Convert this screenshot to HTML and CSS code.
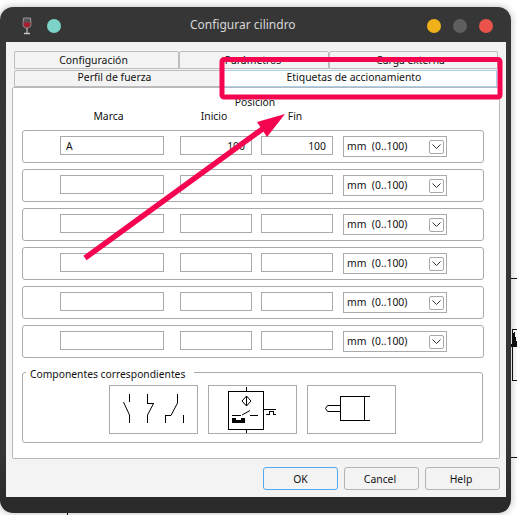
FILE: index.html
```html
<!DOCTYPE html>
<html lang="es">
<head>
<meta charset="utf-8">
<title>Configurar cilindro</title>
<link rel="stylesheet" href="styles.css">
</head>
<body>
<svg class="backdrop" width="517" height="515" viewBox="0 0 517 515" shape-rendering="crispEdges">
  <path d="M511 278.500H517M512.500 329.500H517M512.500 380.500H517M512.500 329V381M511 457.500H517M67.500 513V515" stroke="#111" fill="none"/>
  <path d="M511 347L514 330L517 343V347Z" fill="#111"/>
</svg>
<div class="window">
  <header class="titlebar">
    <div class="title-left">
      <svg class="wine" width="10" height="18" viewBox="0 0 10 18">
        <path d="M1.500 1H8.500L9 7C9 10 7 11 5 11C3 11 1 10 1 7Z" fill="#555" stroke="#aaa" stroke-width=".8"/>
        <path d="M1.500 5.500H8.500C9 9 7 10.500 5 10.500C3 10.500 1 9 1.500 5.500Z" fill="#a81c30"/>
        <path d="M5 11V16" stroke="#bbb" stroke-width="1.200"/>
        <path d="M2 16.500H8" stroke="#ccc" stroke-width="1.400"/>
      </svg>
      <span class="dot dot-teal"></span>
    </div>
    <h1 class="title">Configurar cilindro</h1>
    <div class="title-right">
      <span class="dot dot-amber"></span>
      <span class="dot dot-grey"></span>
      <span class="dot dot-red"></span>
    </div>
  </header>
  <div class="dialog">
    <div class="tabs tabs-back">
      <div class="tab tab-a">Configuración</div>
      <div class="tab tab-b">Parámetros</div>
      <div class="tab tab-c">Carga externa</div>
    </div>
    <div class="tabs tabs-front">
      <div class="tab tab-d">Perfil de fuerza</div>
      <div class="tab tab-e">Etiquetas de accionamiento</div>
    </div>
    <main class="pane">
      <div class="head">
        <span class="h-pos">Posición</span>
        <span class="h-marca">Marca</span>
        <span class="h-inicio">Inicio</span>
        <span class="h-fin">Fin</span>
      </div>
      <div class="rows">
        <div class="row">
          <input class="field wide" value="A">
          <input class="field num gap-a" value="100">
          <input class="field num gap-b" value="100">
          <div class="combo"><span>mm  (0..100)</span><span class="drop"><svg width="9" height="5" viewBox="0 0 9 5"><path d="M.5.500L4.500 4.500L8.500.500" fill="none" stroke="#333"/></svg></span></div>
        </div>
        <div class="row">
          <input class="field wide">
          <input class="field num gap-a">
          <input class="field num gap-b">
          <div class="combo"><span>mm  (0..100)</span><span class="drop"><svg width="9" height="5" viewBox="0 0 9 5"><path d="M.5.500L4.500 4.500L8.500.500" fill="none" stroke="#333"/></svg></span></div>
        </div>
        <div class="row">
          <input class="field wide">
          <input class="field num gap-a">
          <input class="field num gap-b">
          <div class="combo"><span>mm  (0..100)</span><span class="drop"><svg width="9" height="5" viewBox="0 0 9 5"><path d="M.5.500L4.500 4.500L8.500.500" fill="none" stroke="#333"/></svg></span></div>
        </div>
        <div class="row">
          <input class="field wide">
          <input class="field num gap-a">
          <input class="field num gap-b">
          <div class="combo"><span>mm  (0..100)</span><span class="drop"><svg width="9" height="5" viewBox="0 0 9 5"><path d="M.5.500L4.500 4.500L8.500.500" fill="none" stroke="#333"/></svg></span></div>
        </div>
        <div class="row">
          <input class="field wide">
          <input class="field num gap-a">
          <input class="field num gap-b">
          <div class="combo"><span>mm  (0..100)</span><span class="drop"><svg width="9" height="5" viewBox="0 0 9 5"><path d="M.5.500L4.500 4.500L8.500.500" fill="none" stroke="#333"/></svg></span></div>
        </div>
        <div class="row">
          <input class="field wide">
          <input class="field num gap-a">
          <input class="field num gap-b">
          <div class="combo"><span>mm  (0..100)</span><span class="drop"><svg width="9" height="5" viewBox="0 0 9 5"><path d="M.5.500L4.500 4.500L8.500.500" fill="none" stroke="#333"/></svg></span></div>
        </div>
      </div>
      <section class="group">
        <span class="legend">Componentes correspondientes</span>
        <div class="symbols">
          <div class="symbol">
            <svg width="87" height="47" viewBox="110 386 87 47" fill="none" stroke="#000" shape-rendering="crispEdges">
              <path d="M129.500 394V402M129.500 415V423" />
              <path d="M123.500 402L129.500 415" shape-rendering="auto"/>
              <path d="M147.500 394V403.500H154M147.500 415V423" />
              <path d="M153.500 403.500L147.500 415" shape-rendering="auto"/>
              <path d="M177.500 394V403M165.500 423V415.500H171M183.500 415V423" />
              <path d="M177.500 403L171 415.500" shape-rendering="auto"/>
            </svg>
          </div>
          <div class="symbol">
            <svg width="87" height="47" viewBox="209 386 87 47" fill="none" stroke="#000" shape-rendering="crispEdges">
              <path d="M228.500 391.500H263.500V429.500H228.500ZM246.500 387V391M246.500 430V433"/>
              <path d="M246.500 396L251 401L246.500 406L242 401Z" shape-rendering="auto"/>
              <path d="M246.500 396V406"/>
              <path d="M232 415.500H241M250 415.500H258"/>
              <path d="M242 415L250 410.500" shape-rendering="auto"/>
              <path d="M232 418H236V420H241V418H245V423H232Z" fill="#000" stroke="none"/>
              <path d="M264 409.500H276M266 414.500H269.500V411.500H273.500V414.500H276"/>
            </svg>
          </div>
          <div class="symbol">
            <svg width="87" height="47" viewBox="308 386 87 47" fill="none" stroke="#000" shape-rendering="crispEdges">
              <path d="M340.500 396.500H370M340.500 420.500H370M340.500 396V421M364.500 396V421"/>
              <path d="M340 405.500H327.500L325.500 408.500L327.500 411.500H340" shape-rendering="auto"/>
            </svg>
          </div>
        </div>
      </section>
    </main>
    <footer class="actions">
      <button class="btn btn-default">OK</button>
      <button class="btn btn-shift">Cancel</button>
      <button class="btn btn-shift">Help</button>
    </footer>
  </div>
</div>
<svg class="annotation" width="517" height="515" viewBox="0 0 517 515">
  <rect x="222" y="59.500" width="278" height="37.500" rx="2" fill="none" stroke="#f5054f" stroke-width="5"/>
  <path d="M85 258L268 125" fill="none" stroke="#f5054f" stroke-width="5.500"/>
  <path d="M285 114L257 122L267 137Z" fill="#f5054f"/>
</svg>
</body>
</html>
```
FILE: styles.css
```css
* { box-sizing: border-box; }

html, body {
  margin: 0;
  padding: 0;
}

body {
  position: relative;
  width: 517px;
  height: 515px;
  overflow: hidden;
  background: #fff;
  font-family: "Noto Sans", "Open Sans", sans-serif;
  font-size: 10.400px;
  color: #111;
}

.backdrop, .annotation {
  position: absolute;
  left: 0;
  top: 0;
}

.annotation { pointer-events: none; }

.window {
  position: absolute;
  left: 0;
  top: 7px;
  width: 511px;
  height: 506px;
  display: flex;
  flex-direction: column;
  background: linear-gradient(#363636 0, #353535 88%, #2a2a2a 97%);
  border-radius: 13px;
  box-shadow: 0 0 7px 1px rgba(0, 0, 0, 0.22);
}

.titlebar {
  height: 35px;
  flex: none;
  display: flex;
  align-items: center;
  justify-content: space-between;
  padding: 2px 18px 0 22px;
  position: relative;
}

.title-left, .title-right {
  display: flex;
  align-items: center;
}

.title-left { gap: 15px; }
.title-right { gap: 12px; }

.title {
  position: absolute;
  left: 190px;
  top: 9px;
  margin: 0;
  font-family: "Noto Sans", sans-serif;
  font-size: 12px;
  line-height: 18px;
  font-weight: 400;
  color: #d6d6d6;
}

.dot {
  display: block;
  width: 14px;
  height: 14px;
  border-radius: 50%;
}

.dot-teal { background: #7dd3c8; }
.dot-amber { background: #f0b01a; }
.dot-grey { background: #5e5e5e; }
.dot-red { background: #e9534a; }

.dialog {
  flex: 1;
  margin: 0 5px 16px 6px;
  padding: 9px 6px 0;
  background: #f3f3f3;
  display: flex;
  flex-direction: column;
}

.tabs {
  display: flex;
  height: 18px;
}

.tabs-back {
  margin: 0 0 1px 2px;
  height: 18px;
}

.tabs-front {
  margin-left: 2px;
  height: 17px;
}

.tab {
  display: flex;
  align-items: center;
  justify-content: center;
  border: 1px solid #bdbdbd;
  border-radius: 2px 2px 0 0;
  background: #f3f3f3;
  line-height: 15px;
  padding-bottom: 2px;
}

.tabs-back .tab { padding-bottom: 0; }

.tab-a { width: 165px; padding-right: 6px; }
.tab-b { width: 150px; padding-right: 2px; }
.tab-c { width: 169px; padding-right: 6px; }
.tab-d { width: 208px; padding-right: 7px; }

.tab-e {
  width: 275px;
  padding-right: 11px;
  background: #fff;
  border-color: #a4d0f2;
  border-radius: 0;
}

.pane {
  height: 372px;
  background: #fff;
  border: 1px solid #b8b8b8;
  border-radius: 2px;
  padding: 7px 9px 0;
}

.head {
  display: grid;
  grid-template-columns: 104px 16px 72px 9px 72px;
  grid-template-rows: 14px 15px;
  padding-left: 38px;
  line-height: 15px;
  height: 35px;
  text-align: center;
}

.h-pos { grid-column: 3 / 6; grid-row: 1; padding-right: 3px; }
.h-marca { grid-column: 1; grid-row: 2; padding-right: 7px; }
.h-inicio { grid-column: 3; grid-row: 2; padding-right: 4px; }
.h-fin { grid-column: 5; grid-row: 2; padding-right: 4px; }

.rows {
  display: flex;
  flex-direction: column;
  gap: 6px;
}

.row {
  height: 33px;
  width: 462px;
  border: 1px solid #aaa;
  border-radius: 3px;
  padding: 5px 0 0 37px;
  display: flex;
  align-items: flex-start;
}

.field {
  display: block;
  height: 19px;
  margin: 0;
  border: 1px solid #aaa;
  border-radius: 0;
  background: #fff;
  outline: none;
  font: inherit;
  color: inherit;
  padding: 0 5px;
}

.wide { width: 104px; }

.num {
  width: 72px;
  text-align: right;
  padding-right: 6px;
}

.gap-a { margin-left: 16px; }
.gap-b { margin-left: 9px; }

.combo {
  width: 104px;
  height: 21px;
  margin-left: 10px;
  border: 1px solid #aaa;
  display: flex;
  align-items: center;
  justify-content: space-between;
  padding: 0 2px 0 3px;
  white-space: pre;
  line-height: 15px;
}

.drop {
  width: 15px;
  height: 14px;
  border: 1px solid #a8a8a8;
  border-radius: 2px;
  display: flex;
  align-items: center;
  justify-content: center;
}

.drop svg { display: block; }

.group {
  position: relative;
  width: 461px;
  height: 71px;
  margin-top: 14px;
  border: 1px solid #aaa;
  border-radius: 3px;
  padding: 12px 0 0 86px;
}

.legend {
  position: absolute;
  left: 3px;
  top: -6px;
  padding: 0 9px 0 4px;
  background: #fff;
  line-height: 15px;
  font-size: 10.300px;
}

.symbols {
  display: flex;
  gap: 10px;
}

.symbol {
  width: 89px;
  height: 49px;
  border: 1px solid #aaa;
  background: #fff;
}

.symbol svg { display: block; }

.actions {
  display: flex;
  justify-content: flex-end;
  gap: 6px;
  margin-top: 8px;
}

.btn {
  width: 75px;
  height: 23px;
  margin: 0;
  padding: 0;
  border: 1px solid #b4b4b4;
  border-radius: 3px;
  background: #f3f3f3;
  font: inherit;
  color: inherit;
}

.btn-shift { padding-right: 3px; }
.btn-default { border-color: #58a8ee; }
```
